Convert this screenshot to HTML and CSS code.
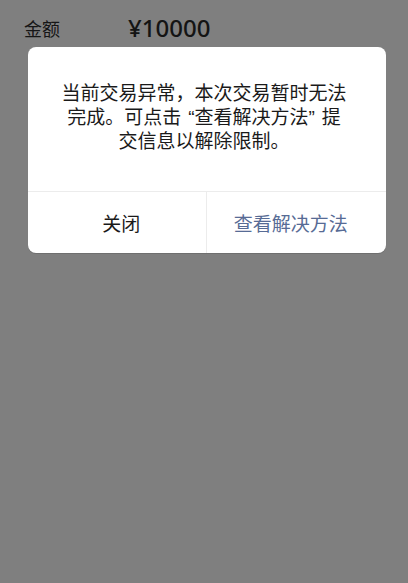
FILE: index.html
```html
<!DOCTYPE html>
<html lang="zh-CN">
<head>
<meta charset="utf-8">
<title>交易异常</title>
<link rel="stylesheet" href="styles.css">
</head>
<body>
<div class="screen">
  <div class="amount-row">
    <span class="label">金额</span>
    <span class="amount">¥10000</span>
  </div>
  <div class="dialog">
    <div class="message">
      <div class="line">当前交易异常，本次交易暂时无法</div>
      <div class="line">完成。可点击<span class="q-open">“</span>查看解决方法<span class="q-close">”</span>提</div>
      <div class="line">交信息以解除限制。</div>
    </div>
    <div class="actions">
      <div class="btn btn-close">关闭</div>
      <div class="btn btn-primary">查看解决方法</div>
    </div>
  </div>
</div>
</body>
</html>
```
FILE: styles.css
```css
html, body {
  margin: 0;
  padding: 0;
  background: #7f7f7f;
}
body {
  font-family: "Noto Sans", "Noto Sans CJK SC", sans-serif;
  color: #111111;
}
.screen {
  width: 408px;
  height: 583px;
  overflow: hidden;
}
.amount-row {
  display: flex;
  align-items: center;
  padding: 16px 0 0 24px;
  height: 24px;
}
.label {
  flex: 0 0 104px;
  font-family: "Noto Sans CJK SC", sans-serif;
  font-size: 18px;
  line-height: 24px;
  color: #161616;
}
.amount {
  font-size: 24px;
  line-height: 24px;
  font-weight: 500;
  color: #141414;
}
.dialog {
  margin: 7px 0 0 28px;
  width: 358px;
  background: #ffffff;
  border-radius: 8px;
  overflow: hidden;
  box-shadow: 0 1px 0 rgba(0, 0, 0, 0.12);
}
.message {
  font-family: "Liberation Sans", "Noto Sans CJK SC", sans-serif;
  font-size: 19px;
  text-align: center;
  color: #1a1a1a;
  padding: 35px 37px 37px 31px;
  border-bottom: 1px solid #ececec;
}
.line {
  height: 24px;
  line-height: 24px;
  white-space: nowrap;
}
.q-open {
  margin-left: 7px;
}
.q-close {
  margin-right: 7px;
}
.actions {
  display: flex;
  height: 61px;
}
.btn {
  flex: 1 1 0;
  display: flex;
  align-items: center;
  justify-content: center;
  font-family: "Noto Sans CJK SC", sans-serif;
  font-size: 19px;
}
.btn-close {
  color: #1a1a1a;
  padding-left: 9px;
  border-right: 1px solid #ececec;
}
.btn-primary {
  color: #576b95;
  padding-right: 11px;
}
```
